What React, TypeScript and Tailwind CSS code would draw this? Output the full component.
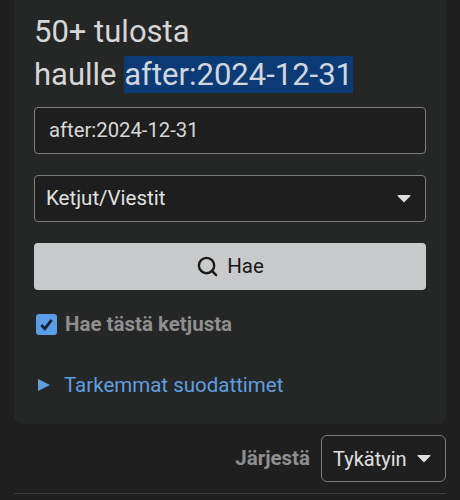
import { Search } from "lucide-react";

function Caret({ className }: { className: string }) {
  return (
    <svg viewBox="0 0 14 9" className={className} fill="currentColor">
      <path d="M1 1h12a.6.6 0 0 1 .4 1L7.5 8a.7.7 0 0 1-1 0L.6 2A.6.6 0 0 1 1 1z" />
    </svg>
  );
}

export default function App() {
  return (
    <div className="h-[500px] w-[460px] overflow-hidden bg-[#1f1f1f] px-[14px] font-['Roboto',sans-serif] text-[20.5px]">
      <div className="h-[424px] rounded-b-lg bg-[#252626] px-5 pt-[10px]">
        <h2 className="text-[31px] leading-[43px] font-normal text-[#d6d6d6]">
          50+ tulosta
          <br />
          haulle{" "}
          <span className="bg-[#0b3a75] text-[#cfd6de]">after:2024-12-31</span>
        </h2>

        <div className="mt-[11px] flex h-[47px] items-center rounded border border-[#7c7c7c] bg-[#1e1e1e] px-[14px] text-[20.3px] text-[#d8d8d8]">
          after:2024-12-31
        </div>

        <div className="mt-[21px] flex h-[47px] items-center justify-between rounded border border-[#7c7c7c] bg-[#1e1e1e] pr-[14px] pl-[11px] text-[#e0e0e0]">
          <span>Ketjut/Viestit</span>
          <Caret className="h-[9px] w-[14px] text-[#dcdcdc]" />
        </div>

        <button className="mt-[21px] flex h-[47px] w-full items-center justify-center gap-[8px] rounded bg-[#c9cacb] text-[#1a1a1a]">
          <Search size={23} strokeWidth={2.5} />
          <span>Hae</span>
        </button>

        <label className="mt-[24px] flex h-[21px] items-center gap-2 pl-[2px] font-bold text-[#8f8f8f]">
          <span className="flex h-[21px] w-[21px] items-center justify-center rounded-[3px] bg-[#5a9eea]">
            <svg viewBox="0 0 16 16" className="h-[15px] w-[15px] text-[#1a2430]" fill="none" stroke="currentColor" strokeWidth="3">
              <path d="M2.5 8.5 6.2 12.5 13.5 3" />
            </svg>
          </span>
          Hae tästä ketjusta
        </label>

        <div className="mt-[35px] flex items-center gap-[14px] pl-1 text-[#5f9fe0]">
          <svg viewBox="0 0 12 12" className="h-3 w-3" fill="currentColor">
            <path d="M0 0 12 6 0 12z" />
          </svg>
          <span>Tarkemmat suodattimet</span>
        </div>
      </div>

      <div className="mt-[11px] flex items-center justify-end gap-[11px]">
        <span className="font-bold text-[#8f8f8f]">Järjestä</span>
        <div className="flex h-[47px] w-[125px] items-center justify-between rounded-md border border-[#7c7c7c] pr-[14px] pl-[11px] text-[#e0e0e0]">
          <span className="text-[20px]">Tykätyin</span>
          <Caret className="h-[9px] w-[14px] text-[#dcdcdc]" />
        </div>
      </div>

      <div className="mt-[11px] h-px bg-[#3a3a3a]" />
    </div>
  );
}
